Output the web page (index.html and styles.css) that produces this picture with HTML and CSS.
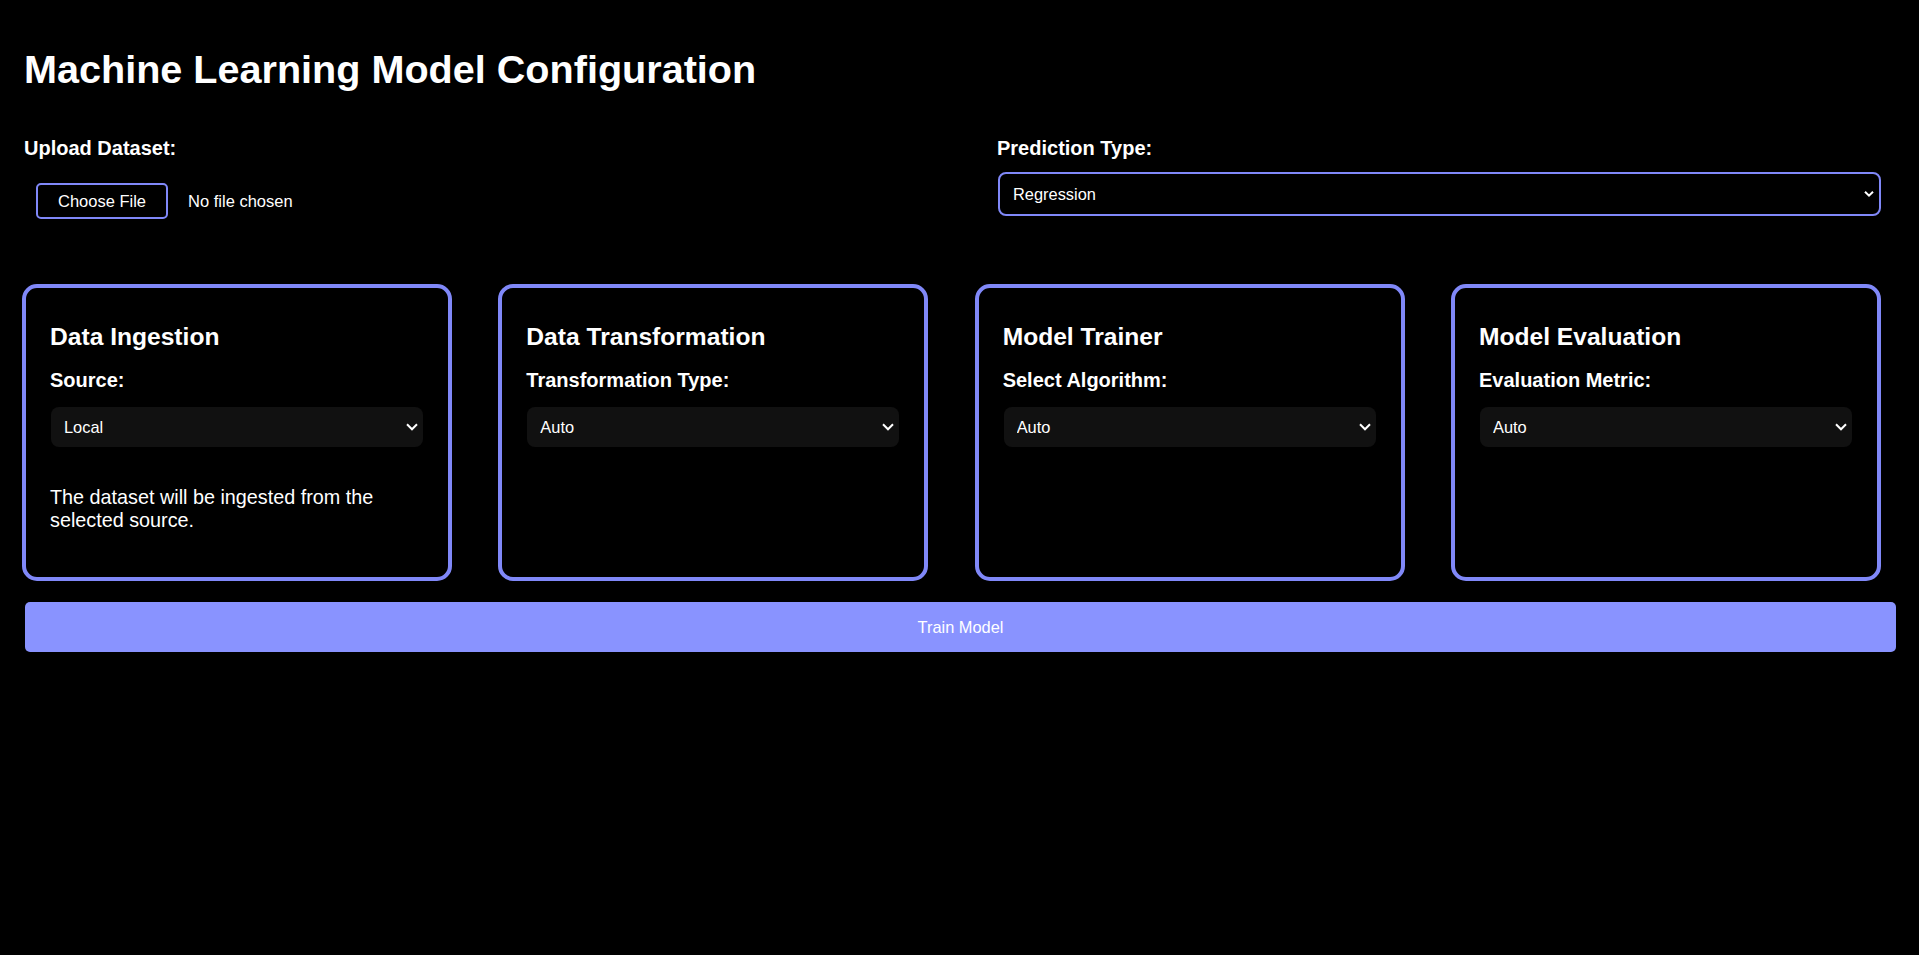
FILE: index.html
```html
<!DOCTYPE html>
<html lang="en">
<head>
<meta charset="utf-8">
<title>Machine Learning Model Configuration</title>
<link rel="stylesheet" href="styles.css">
</head>
<body>
<div class="page">
  <h1 class="title">Machine Learning Model Configuration</h1>

  <div class="top-row">
    <div class="field">
      <label class="field-label">Upload Dataset:</label>
      <div class="file-row">
        <button class="file-btn" type="button">Choose File</button>
        <span class="file-name">No file chosen</span>
      </div>
    </div>
    <div class="field">
      <label class="field-label">Prediction Type:</label>
      <div class="select-wrap select-wrap-main">
        <select class="select-main">
          <option>Regression</option>
          <option>Classification</option>
        </select>
        <svg class="chev chev-main" width="10" height="7" viewBox="0 0 10 7"><path d="M1 1.2 L5 5.2 L9 1.2" fill="none" stroke="#fff" stroke-width="2"/></svg>
      </div>
    </div>
  </div>

  <div class="cards">
    <div class="card">
      <h2 class="card-title">Data Ingestion</h2>
      <label class="card-label">Source:</label>
      <div class="select-wrap select-wrap-card">
        <select class="select-card"><option>Local</option><option>Cloud</option></select>
        <svg class="chev chev-card" width="12" height="8" viewBox="0 0 12 8"><path d="M1 1.3 L6 6.3 L11 1.3" fill="none" stroke="#fff" stroke-width="2"/></svg>
      </div>
      <p class="card-text">The dataset will be ingested from the selected source.</p>
    </div>
    <div class="card">
      <h2 class="card-title">Data Transformation</h2>
      <label class="card-label">Transformation Type:</label>
      <div class="select-wrap select-wrap-card">
        <select class="select-card"><option>Auto</option></select>
        <svg class="chev chev-card" width="12" height="8" viewBox="0 0 12 8"><path d="M1 1.3 L6 6.3 L11 1.3" fill="none" stroke="#fff" stroke-width="2"/></svg>
      </div>
    </div>
    <div class="card">
      <h2 class="card-title">Model Trainer</h2>
      <label class="card-label">Select Algorithm:</label>
      <div class="select-wrap select-wrap-card">
        <select class="select-card"><option>Auto</option></select>
        <svg class="chev chev-card" width="12" height="8" viewBox="0 0 12 8"><path d="M1 1.3 L6 6.3 L11 1.3" fill="none" stroke="#fff" stroke-width="2"/></svg>
      </div>
    </div>
    <div class="card">
      <h2 class="card-title">Model Evaluation</h2>
      <label class="card-label">Evaluation Metric:</label>
      <div class="select-wrap select-wrap-card">
        <select class="select-card"><option>Auto</option></select>
        <svg class="chev chev-card" width="12" height="8" viewBox="0 0 12 8"><path d="M1 1.3 L6 6.3 L11 1.3" fill="none" stroke="#fff" stroke-width="2"/></svg>
      </div>
    </div>
  </div>

  <button class="train-btn" type="button">Train Model</button>
</div>
</body>
</html>
```

FILE: styles.css
```css
* { box-sizing: border-box; }

html, body {
  margin: 0;
  padding: 0;
  background: #000;
  color: #fff;
  font-family: "Liberation Sans", Arial, sans-serif;
}

.page {
  padding: 47px 23px 40px 22px;
}

.title {
  margin: 0 0 0 2px;
  font-size: 39.6px;
  line-height: 45px;
  font-weight: 700;
}

.top-row {
  display: grid;
  grid-template-columns: 973px 887px;
  margin: 45px 0 0 2px;
}

.field {
  display: flex;
  flex-direction: column;
  align-items: flex-start;
}

.field-label {
  font-size: 20px;
  line-height: 23px;
  font-weight: 700;
}

.file-row {
  display: flex;
  align-items: center;
  margin-top: 23px;
  padding-left: 12px;
}

.file-btn {
  height: 36px;
  padding: 0 20px;
  background: #000;
  color: #fff;
  border: 2px solid #8088f8;
  border-radius: 5px;
  font-family: inherit;
  font-size: 16.5px;
}

.file-name {
  margin-left: 20px;
  font-size: 16.5px;
}

.select-wrap {
  position: relative;
  align-self: stretch;
}

.select-wrap-main {
  margin: 12px 3px 0 1px;
}

.select-main {
  display: block;
  width: 100%;
  height: 44px;
  padding: 0 30px 0 13px;
  appearance: none;
  -webkit-appearance: none;
  background: #000;
  color: #fff;
  border: 2px solid #8088f8;
  border-radius: 8px;
  font-family: inherit;
  font-size: 16.4px;
}

.chev {
  position: absolute;
  top: 50%;
  transform: translateY(-50%);
  pointer-events: none;
}

.chev-main { right: 7px; }
.chev-card { right: 5px; }

.cards {
  display: grid;
  grid-template-columns: repeat(4, 430px);
  column-gap: 46.33px;
  margin-top: 64.5px;
}

.card {
  border: 4px solid #8088f8;
  border-radius: 15px;
  padding: 23px 24px;
  display: flex;
  flex-direction: column;
}

.card-title {
  margin: 12.5px 0 0;
  font-size: 24.6px;
  line-height: 28px;
  font-weight: 700;
}

.card-label {
  margin-top: 17.5px;
  font-size: 20px;
  line-height: 23px;
  font-weight: 700;
}

.select-wrap-card {
  margin: 15px 1px 0;
}

.select-card {
  display: block;
  width: 100%;
  height: 40px;
  padding: 0 30px 0 13px;
  appearance: none;
  -webkit-appearance: none;
  background: #111;
  color: #fff;
  border: none;
  border-radius: 8px;
  font-family: inherit;
  font-size: 16.4px;
}

.card-text {
  margin: 39.4px 0 21.3px;
  font-size: 19.8px;
  line-height: 23.4px;
}

.train-btn {
  display: block;
  width: calc(100% - 3px);
  height: 50px;
  margin: 21px 0 0 3px;
  background: #8993ff;
  color: #fff;
  border: none;
  border-radius: 5px;
  font-family: inherit;
  font-size: 16.4px;
}
```
